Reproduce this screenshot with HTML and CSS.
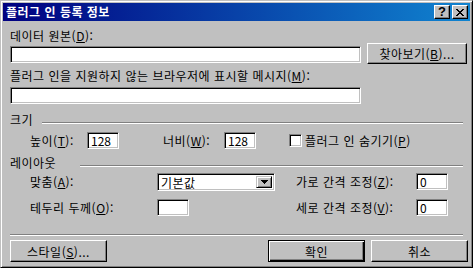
FILE: index.html
```html
<!DOCTYPE html>
<html lang="ko">
<head>
  <meta charset="UTF-8" />
  <title>플러그 인 등록 정보</title>
  <link rel="stylesheet" href="styles.css">
</head>
<body>
  <div class="dialog">
    <div class="titlebar">
      <span class="title">플러그 인 등록 정보</span>
      <div class="title-buttons">
        <span class="tbtn help">?</span>
        <span class="tbtn close">
          <svg width="8" height="7" viewBox="0 0 8 7" shape-rendering="crispEdges">
            <path d="M0 0h2v1h-2zM6 0h2v1h-2zM1 1h2v1h-2zM5 1h2v1h-2zM2 2h4v1h-4zM3 3h2v1h-2zM2 4h4v1h-4zM1 5h2v1h-2zM5 5h2v1h-2zM0 6h2v1h-2zM6 6h2v1h-2z" fill="#000"/>
          </svg>
        </span>
      </div>
    </div>

    <div class="content">
      <div class="lbl source-lbl">데이터 원본(<u>D</u>):</div>
      <div class="row source-row">
        <div class="field wide"></div>
        <div class="btn browse">찾아보기(<u>B</u>)...</div>
      </div>

      <div class="lbl msg-lbl">플러그 인을 지원하지 않는 브라우저에 표시할 메시지(<u>M</u>):</div>
      <div class="field wide msg-field"></div>

      <div class="group size-group">
        <span class="group-name">크기</span>
        <span class="groove"></span>
      </div>
      <div class="row size-row">
        <span class="cell height-lbl">높이(<u>T</u>):</span>
        <div class="field small">128</div>
        <span class="cell width-lbl">너비(<u>W</u>):</span>
        <div class="field small">128</div>
        <span class="check"></span>
        <span class="check-lbl">플러그 인 숨기기(<u>P</u>)</span>
      </div>

      <div class="group layout-group">
        <span class="group-name">레이아웃</span>
        <span class="groove"></span>
      </div>
      <div class="row layout-row align-row">
        <span class="cell left-lbl">맞춤(<u>A</u>):</span>
        <div class="slot">
          <div class="field combo">
            <span class="combo-text">기본값</span>
            <span class="combo-btn">
              <svg width="7" height="4" viewBox="0 0 7 4" shape-rendering="crispEdges">
                <path d="M0 0h7v1h-7zM1 1h5v1h-5zM2 2h3v1h-3zM3 3h1v1h-1z" fill="#000"/>
              </svg>
            </span>
          </div>
        </div>
        <span class="cell right-lbl">가로 간격 조정(<u>Z</u>):</span>
        <div class="field small">0</div>
      </div>
      <div class="row layout-row border-row">
        <span class="cell left-lbl">테두리 두께(<u>O</u>):</span>
        <div class="slot">
          <div class="field small"></div>
        </div>
        <span class="cell right-lbl">세로 간격 조정(<u>V</u>):</span>
        <div class="field small">0</div>
      </div>

      <div class="groove separator"></div>

      <div class="row buttons">
        <div class="btn action">스타일(<u>S</u>)...</div>
        <div class="spacer"></div>
        <div class="btn action default">확인</div>
        <div class="btn action">취소</div>
      </div>
    </div>
  </div>
</body>
</html>
```

FILE: styles.css
```css
* {
  box-sizing: border-box;
}

html, body {
  margin: 0;
  background: #c0c0c0;
}

body {
  font-family: "Noto Sans CJK KR", "Liberation Sans", sans-serif;
  font-size: 12px;
  letter-spacing: 0.5px;
  color: #000;
}

u {
  text-decoration: underline;
  text-underline-offset: 1px;
}

.dialog {
  width: 473px;
  height: 268px;
  background: #c0c0c0;
  border: 1px solid;
  border-color: #c0c0c0 #000 #000 #c0c0c0;
  box-shadow: inset 1px 1px #fff, inset -1px -1px #808080;
  padding: 2px;
}

/* title bar */
.titlebar {
  height: 18px;
  display: flex;
  align-items: center;
  justify-content: space-between;
  padding: 0 2px 0 3px;
  background: linear-gradient(to right, #000080, #1084d0);
}

.title {
  color: #fff;
  font-weight: bold;
  line-height: 18px;
  white-space: nowrap;
}

.title-buttons {
  display: flex;
  gap: 2px;
}

.tbtn {
  width: 16px;
  height: 14px;
  display: flex;
  align-items: center;
  justify-content: center;
  background: #c0c0c0;
  border: 1px solid;
  border-color: #fff #000 #000 #fff;
  box-shadow: inset -1px -1px #808080;
}

.help {
  font-family: "Liberation Sans", sans-serif;
  font-weight: bold;
  font-size: 13px;
  line-height: 12px;
  letter-spacing: 0;
}

/* body */
.content {
  padding: 0 2px 0 7px;
  display: flex;
  flex-direction: column;
}

.row {
  display: flex;
  align-items: center;
}

.lbl {
  line-height: 13px;
  white-space: nowrap;
}

.source-lbl {
  margin-top: 8px;
}

.source-row {
  height: 21px;
  margin-top: 1px;
  align-items: flex-start;
}

.source-row .wide {
  margin-top: 3px;
}

.msg-lbl {
  margin-top: 5px;
}

.msg-field {
  margin-top: 5px;
}

.field {
  background: #fff;
  height: 17px;
  border: 1px solid;
  border-color: #808080 #fff #fff #808080;
  box-shadow: inset 1px 1px #000, inset -1px -1px #c0c0c0;
  padding: 0 3px;
  line-height: 15px;
  letter-spacing: 0;
  white-space: nowrap;
  flex-shrink: 0;
}

.wide {
  width: 351px;
}

.small {
  width: 32px;
}

.btn {
  display: flex;
  align-items: center;
  justify-content: center;
  background: #c0c0c0;
  border: 1px solid;
  border-color: #fff #000 #000 #fff;
  box-shadow: inset -1px -1px #808080;
  white-space: nowrap;
}

.browse {
  width: 100px;
  height: 21px;
  margin-left: 6px;
}

/* groups */
.group {
  display: flex;
  align-items: flex-start;
  line-height: 13px;
  margin-top: 9px;
  margin-right: 5px;
}

.group-name {
  flex-shrink: 0;
}

.size-group .group-name {
  width: 32px;
}

.layout-group {
  margin-top: 7px;
}

.layout-group .group-name {
  width: 70px;
}

.groove {
  flex: 1;
  height: 2px;
  margin-top: 9px;
  border-top: 1px solid #808080;
  border-bottom: 1px solid #fff;
}

.cell {
  flex-shrink: 0;
  white-space: nowrap;
}

.size-row {
  margin-top: 6px;
  padding-left: 20px;
}

.height-lbl {
  width: 57px;
}

.width-lbl {
  width: 61px;
  margin-left: 44px;
}

.check {
  width: 13px;
  height: 13px;
  margin-left: 33px;
  background: #fff;
  border: 1px solid;
  border-color: #808080 #fff #fff #808080;
  box-shadow: inset 1px 1px #000, inset -1px -1px #c0c0c0;
}

.check-lbl {
  margin-left: 3px;
  white-space: nowrap;
}

.layout-row {
  padding-left: 20px;
}

.align-row {
  margin-top: 3px;
  height: 19px;
}

.border-row {
  margin-top: 8px;
}

.left-lbl {
  width: 127px;
}

.slot {
  width: 118px;
  flex-shrink: 0;
}

.right-lbl {
  width: 120px;
  margin-left: 21px;
}

.combo {
  width: 118px;
  height: 18px;
  display: flex;
  align-items: stretch;
  padding: 2px 2px 2px 0;
}

.combo-text {
  flex: 1;
  padding-left: 3px;
  line-height: 14px;
  letter-spacing: 0.5px;
}

.combo-btn {
  width: 16px;
  display: flex;
  align-items: center;
  justify-content: center;
  background: #c0c0c0;
  border: 1px solid;
  border-color: #c0c0c0 #000 #000 #c0c0c0;
  box-shadow: inset 1px 1px #fff, inset -1px -1px #808080;
}

.separator {
  flex: none;
  margin-top: 18px;
  margin-right: 5px;
}

.buttons {
  margin-top: 4px;
  gap: 6px;
}

.spacer {
  flex: 1;
}

.action {
  width: 97px;
  height: 22px;
}

.default {
  border-color: #000;
  box-shadow: inset 1px 1px #fff, inset -1px -1px #000, inset -2px -2px #808080;
}
```
